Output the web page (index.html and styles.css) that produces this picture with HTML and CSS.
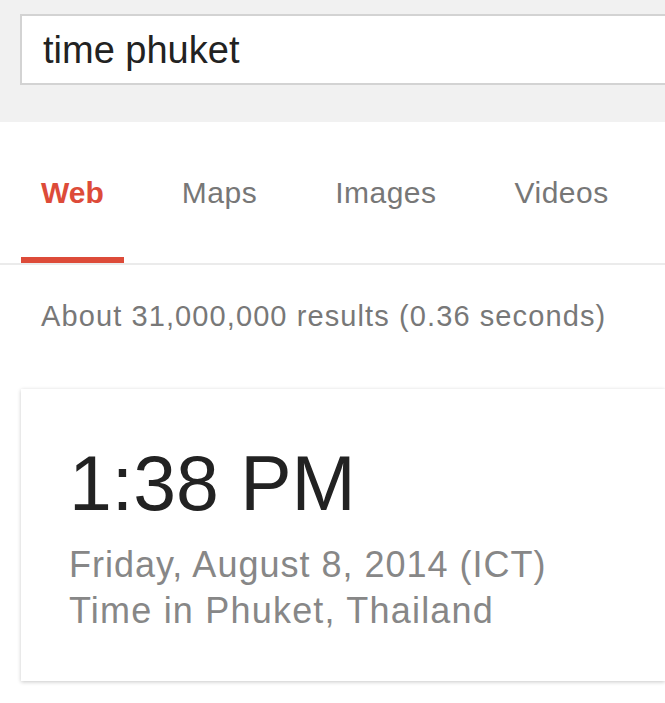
FILE: index.html
```html
<!DOCTYPE html>
<html>
<head>
<meta charset="utf-8">
<link rel="stylesheet" href="styles.css">
</head>
<body>
<header class="header">
  <div class="searchbox">time phuket</div>
</header>
<main class="main">
  <nav class="tabs">
    <div class="tab active">Web</div>
    <div class="tab">Maps</div>
    <div class="tab">Images</div>
    <div class="tab">Videos</div>
  </nav>
  <div class="stats">About 31,000,000 results (0.36 seconds)</div>
  <section class="card">
    <div class="time">1:38 PM</div>
    <div class="sub">Friday, August 8, 2014 (ICT)</div>
    <div class="sub sub2">Time in Phuket, Thailand</div>
  </section>
</main>
</body>
</html>
```

FILE: styles.css
```css
html, body {
  margin: 0;
  padding: 0;
  background: #ffffff;
  font-family: "Liberation Sans", Arial, sans-serif;
}

.header {
  background: #f1f1f1;
  height: 122px;
  padding-top: 14px;
  box-sizing: border-box;
}

.searchbox {
  margin-left: 20px;
  border: 2px solid #d3d3d3;
  border-right: none;
  background: #ffffff;
  padding: 15px 0 14px 21px;
  font-size: 38px;
  line-height: 38px;
  color: #222222;
}

.tabs {
  display: flex;
  gap: 38px;
  padding-left: 21px;
  border-bottom: 2px solid #ebebeb;
}

.tab {
  padding: 56px 20px 49px;
  font-size: 30px;
  line-height: 30px;
  letter-spacing: 0.5px;
  color: #777777;
  border-bottom: 6px solid transparent;
}

.tab.active {
  color: #dd4b39;
  font-weight: bold;
  letter-spacing: 0;
  border-bottom-color: #dd4b39;
}

.stats {
  margin: 37px 0 0 41px;
  font-size: 29px;
  line-height: 29px;
  letter-spacing: 1.1px;
  color: #787878;
}

.card {
  margin: 58px 0 22px 21px;
  padding: 56px 0 47px 48px;
  background: #ffffff;
  box-shadow: 0 1px 4px rgba(0, 0, 0, 0.22);
}

.time {
  font-size: 77px;
  line-height: 77px;
  color: #222222;
  margin-bottom: 20px;
}

.sub {
  font-size: 36px;
  line-height: 46px;
  letter-spacing: 1px;
  color: #878787;
}

.sub2 {
  letter-spacing: 1.2px;
}
```
